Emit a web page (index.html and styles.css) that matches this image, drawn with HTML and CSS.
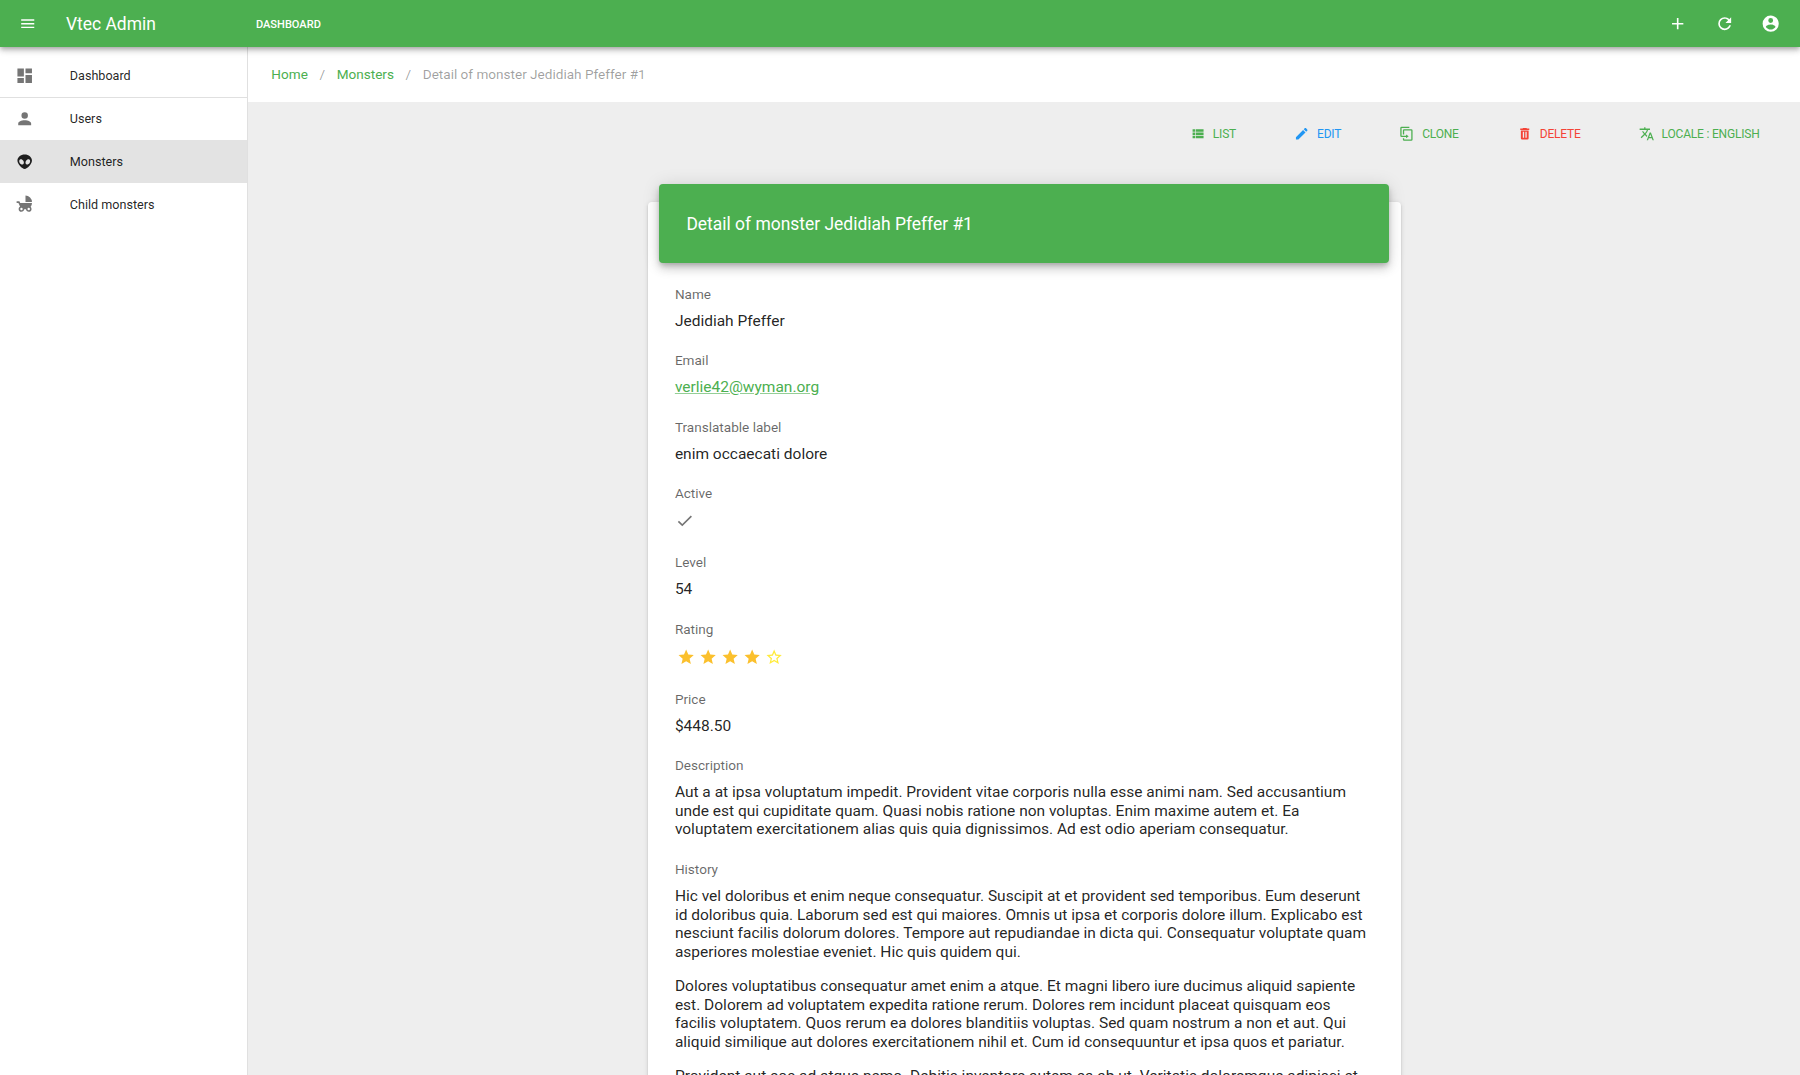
FILE: index.html
```html
<!DOCTYPE html>
<html lang="en">
<head>
<meta charset="utf-8">
<title>Vtec Admin</title>
<link rel="stylesheet" href="styles.css">
</head>
<body>
<header class="app-bar">
  <svg class="icon bar-menu" viewBox="0 0 24 24"><path d="M3 6h18v2H3zM3 11h18v2H3zM3 16h18v2H3z"/></svg>
  <span class="brand">Vtec Admin</span>
  <a class="bar-link">Dashboard</a>
  <div class="bar-actions">
    <svg class="icon" viewBox="0 0 24 24"><path d="M19,13H13V19H11V13H5V11H11V5H13V11H19V13Z"/></svg>
    <svg class="icon" viewBox="0 0 24 24"><path d="M17.65,6.35C16.2,4.9 14.21,4 12,4A8,8 0 0,0 4,12A8,8 0 0,0 12,20C15.73,20 18.84,17.45 19.73,14H17.65C16.83,16.33 14.61,18 12,18A6,6 0 0,1 6,12A6,6 0 0,1 12,6C13.66,6 15.14,6.69 16.22,7.78L13,11H20V4L17.65,6.35Z"/></svg>
    <svg class="icon" viewBox="0 0 24 24"><path d="M12,19.2C9.5,19.2 7.29,17.92 6,16C6.03,14 10,12.9 12,12.9C14,12.9 17.97,14 18,16C16.71,17.92 14.5,19.2 12,19.2M12,5A3,3 0 0,1 15,8A3,3 0 0,1 12,11A3,3 0 0,1 9,8A3,3 0 0,1 12,5M12,2A10,10 0 0,0 2,12A10,10 0 0,0 12,22A10,10 0 0,0 22,12C22,6.47 17.5,2 12,2Z"/></svg>
  </div>
</header>
<div class="shell">
  <nav class="drawer">
    <a class="nav-item"><svg class="icon" viewBox="0 0 24 24"><path d="M13,3V9H21V3M13,21H21V11H13M3,21H11V15H3M3,13H11V3H3V13Z"/></svg><span>Dashboard</span></a>
    <hr class="divider">
    <a class="nav-item"><svg class="icon" viewBox="0 0 24 24"><path d="M12,4A4,4 0 0,1 16,8A4,4 0 0,1 12,12A4,4 0 0,1 8,8A4,4 0 0,1 12,4M12,14C16.42,14 20,15.79 20,18V20H4V18C4,15.79 7.58,14 12,14Z"/></svg><span>Users</span></a>
    <a class="nav-item active"><svg class="icon" viewBox="0 0 24 24"><path d="M12,3C16.97,3 21,6.2 21,10.6C21,15 15.2,21 12,21C8.8,21 3,15 3,10.6C3,6.2 7.03,3 12,3M10.31,10.93C9.29,9.29 7.47,8.58 6.25,9.34C5.03,10.1 4.87,12.05 5.89,13.69C6.92,15.33 8.74,16.04 9.96,15.28C11.18,14.5 11.33,12.57 10.31,10.93M13.69,10.93C12.67,12.57 12.82,14.5 14.04,15.28C15.26,16.04 17.08,15.33 18.11,13.69C19.13,12.05 18.97,10.1 17.75,9.34C16.53,8.58 14.71,9.29 13.69,10.93Z"/></svg><span>Monsters</span></a>
    <a class="nav-item"><svg class="icon" viewBox="0 0 24 24"><path fill-rule="evenodd" d="M13,2V10H21A8,8 0 0,0 13,2M19.32,15.89C20.37,14.54 21,12.84 21,11H6.44L5.49,9H2V11H4.22C4.22,11 6.11,15.07 6.34,15.42C5.24,16 4.5,17.17 4.5,18.5A3.5,3.5 0 0,0 8,22C9.76,22 11.22,20.7 11.46,19H13.54C13.78,20.7 15.24,22 17,22A3.5,3.5 0 0,0 20.5,18.5C20.5,17.46 20.04,16.53 19.32,15.89M8,20A1.5,1.5 0 0,1 6.5,18.5A1.5,1.5 0 0,1 8,17A1.5,1.5 0 0,1 9.5,18.5A1.5,1.5 0 0,1 8,20M17,20A1.5,1.5 0 0,1 15.5,18.5A1.5,1.5 0 0,1 17,17A1.5,1.5 0 0,1 18.5,18.5A1.5,1.5 0 0,1 17,20Z"/></svg><span>Child monsters</span></a>
  </nav>
  <main class="content">
    <div class="breadcrumbs"><a>Home</a><span>/</span><a>Monsters</a><span>/</span><span class="current">Detail of monster Jedidiah Pfeffer #1</span></div>
    <div class="actions">
      <a class="action"><svg class="icon" viewBox="0 0 24 24"><path d="M9,5V9H21V5M9,19H21V15H9M9,14H21V10H9M4,9H8V5H4M4,19H8V15H4M4,14H8V10H4V14Z"/></svg>List</a>
      <a class="action info"><svg class="icon" viewBox="0 0 24 24"><path d="M20.71,7.04C21.1,6.65 21.1,6 20.71,5.63L18.37,3.29C18,2.9 17.35,2.9 16.96,3.29L15.12,5.12L18.87,8.87M3,17.25V21H6.75L17.81,9.93L14.06,6.18L3,17.25Z"/></svg>Edit</a>
      <a class="action"><svg class="icon" viewBox="0 0 24 24"><path d="M11,17H4A2,2 0 0,1 2,15V3A2,2 0 0,1 4,1H16V3H4V15H11V13L15,16L11,19V17M19,21V7H8V13H6V7A2,2 0 0,1 8,5H19A2,2 0 0,1 21,7V21A2,2 0 0,1 19,23H8A2,2 0 0,1 6,21V19H8V21H19Z"/></svg>Clone</a>
      <a class="action error"><svg class="icon" viewBox="0 0 24 24"><path fill-rule="evenodd" d="M19,4H15.5L14.5,3H9.5L8.5,4H5V6H19M6,19A2,2 0 0,0 8,21H16A2,2 0 0,0 18,19V7H6V19M9,9H11V18H9V9M13,9H15V18H13V9"/></svg>Delete</a>
      <a class="action"><svg class="icon" viewBox="0 0 24 24"><path d="M12.87,15.07L10.33,12.56L10.36,12.53C12.1,10.59 13.34,8.36 14.07,6H17V4H10V2H8V4H1V6H12.17C11.5,7.92 10.44,9.75 9,11.35C8.07,10.32 7.3,9.19 6.69,8H4.69C5.42,9.63 6.42,11.17 7.67,12.56L2.58,17.58L4,19L9,14L12.11,17.11L12.87,15.07M18.5,10H16.5L12,22H14L15.12,19H19.87L21,22H23L18.5,10M15.88,17L17.5,12.67L19.12,17H15.88Z"/></svg>Locale : English</a>
    </div>
    <section class="card">
      <h1 class="card-title">Detail of monster Jedidiah Pfeffer #1</h1>
      <dl class="fields">
        <dt>Name</dt><dd>Jedidiah Pfeffer</dd>
        <dt>Email</dt><dd><a class="mail">verlie42@wyman.org</a></dd>
        <dt>Translatable label</dt><dd>enim occaecati dolore</dd>
        <dt>Active</dt><dd class="check"><svg class="icon" viewBox="0 0 24 24"><path d="M21,7L9,19L3.5,13.5L4.91,12.09L9,16.17L19.59,5.59L21,7Z"/></svg></dd>
        <dt>Level</dt><dd>54</dd>
        <dt>Rating</dt><dd class="stars">
          <svg class="icon" viewBox="0 0 24 24"><path d="M12,17.27L18.18,21L16.54,13.97L22,9.24L14.81,8.62L12,2L9.19,8.62L2,9.24L7.45,13.97L5.82,21L12,17.27Z"/></svg>
          <svg class="icon" viewBox="0 0 24 24"><path d="M12,17.27L18.18,21L16.54,13.97L22,9.24L14.81,8.62L12,2L9.19,8.62L2,9.24L7.45,13.97L5.82,21L12,17.27Z"/></svg>
          <svg class="icon" viewBox="0 0 24 24"><path d="M12,17.27L18.18,21L16.54,13.97L22,9.24L14.81,8.62L12,2L9.19,8.62L2,9.24L7.45,13.97L5.82,21L12,17.27Z"/></svg>
          <svg class="icon" viewBox="0 0 24 24"><path d="M12,17.27L18.18,21L16.54,13.97L22,9.24L14.81,8.62L12,2L9.19,8.62L2,9.24L7.45,13.97L5.82,21L12,17.27Z"/></svg>
          <svg class="icon empty" viewBox="0 0 24 24"><path d="M12,15.39L8.24,17.66L9.23,13.38L5.91,10.5L10.29,10.13L12,6.09L13.71,10.13L18.09,10.5L14.77,13.38L15.76,17.66M22,9.24L14.81,8.63L12,2L9.19,8.63L2,9.24L7.45,13.97L5.82,21L12,17.27L18.18,21L16.54,13.97L22,9.24Z"/></svg>
        </dd>
        <dt>Price</dt><dd>$448.50</dd>
        <dt>Description</dt><dd>Aut a at ipsa voluptatum impedit. Provident vitae corporis nulla esse animi nam. Sed accusantium unde est qui cupiditate quam. Quasi nobis ratione non voluptas. Enim maxime autem et. Ea voluptatem exercitationem alias quis quia dignissimos. Ad est odio aperiam consequatur.</dd>
        <dt>History</dt><dd>
          <p>Hic vel doloribus et enim neque consequatur. Suscipit at et provident sed temporibus. Eum deserunt id doloribus quia. Laborum sed est qui maiores. Omnis ut ipsa et corporis dolore illum. Explicabo est nesciunt facilis dolorum dolores. Tempore aut repudiandae in dicta qui. Consequatur voluptate quam asperiores molestiae eveniet. Hic quis quidem qui.</p>
          <p>Dolores voluptatibus consequatur amet enim a atque. Et magni libero iure ducimus aliquid sapiente est. Dolorem ad voluptatem expedita ratione rerum. Dolores rem incidunt placeat quisquam eos facilis voluptatem. Quos rerum ea dolores blanditiis voluptas. Sed quam nostrum a non et aut. Qui aliquid similique aut dolores exercitationem nihil et. Cum id consequuntur et ipsa quos et pariatur.</p>
          <p>Provident aut eos ad atque nemo. Debitis inventore autem ea ab ut. Veritatis doloremque adipisci et</p>
        </dd>
      </dl>
    </section>
  </main>
</div>
</body>
</html>
```
FILE: styles.css
```css
* { box-sizing: border-box; }

html { font-size: 15.51px; }

body {
  margin: 0;
  height: 100vh;
  overflow: hidden;
  display: flex;
  flex-direction: column;
  background: #eee;
  color: rgba(0, 0, 0, .87);
  font-family: Roboto, sans-serif;
  line-height: 1.5;
}

.icon { display: block; flex: none; width: 1.25rem; height: 1.25rem; fill: currentColor; }

.app-bar {
  position: relative;
  z-index: 2;
  flex: none;
  display: flex;
  align-items: center;
  height: 3rem;
  padding: 0 1.25rem 0 1rem;
  background: #4caf50;
  color: #fff;
  box-shadow: 0 2px 4px -1px rgba(0, 0, 0, .2), 0 4px 5px rgba(0, 0, 0, .14), 0 1px 10px rgba(0, 0, 0, .12);
}
.bar-menu { width: 1.125rem; height: 1.125rem; margin-left: .2rem; }
.brand { width: 12.25rem; margin-left: 1.93rem; padding-top: 2px; font-size: 1.125rem; line-height: 1; white-space: nowrap; }
.bar-link { padding-top: 5px; font-size: .7125rem; font-weight: 500; text-transform: uppercase; }
.bar-actions { display: flex; gap: 1.75rem; margin-left: auto; }

.shell { flex: 1; min-height: 0; display: flex; }

.drawer {
  flex: none;
  width: 16rem;
  padding-top: .5rem;
  background: #fff;
  border-right: 1px solid rgba(0, 0, 0, .12);
}
.nav-item {
  display: flex;
  align-items: center;
  gap: 2.28rem;
  height: 2.75rem;
  padding-left: .97rem;
  font-size: .8125rem;
}
.nav-item span { padding-top: 2.2px; }
.nav-item .icon { color: #757575; }
.nav-item.active { background: #e3e3e3; }
.nav-item.active .icon { color: rgba(0, 0, 0, .87); }
.divider { height: 1px; margin: 0 0 -.5px; border: 0; background: rgba(0, 0, 0, .12); }

.content { flex: 1; min-width: 0; }

.breadcrumbs {
  display: flex;
  align-items: center;
  gap: 11.6px;
  height: 55px;
  padding-left: 23.2px;
  background: #fff;
  font-size: .875rem;
  color: rgba(0, 0, 0, .38);
}
.breadcrumbs a { color: #4caf50; }

.actions {
  display: flex;
  align-items: center;
  justify-content: flex-end;
  gap: 58px;
  height: 64px;
  padding-right: 40.5px;
}
.action {
  display: flex;
  align-items: center;
  gap: 7.5px;
  color: #4caf50;
  font-size: 12px;
  letter-spacing: -.2px;
  text-transform: uppercase;
}
.action .icon { width: 1rem; height: 1rem; }
.action.info { color: #2196f3; }
.action.error { color: #f44336; }

.card {
  width: 753px;
  margin: 36px auto 0;
  padding: 0 12px 24px 11.3px;
  background: #fff;
  border-radius: 4px;
  box-shadow: 0 3px 1px -2px rgba(0, 0, 0, .2), 0 2px 2px rgba(0, 0, 0, .14), 0 1px 5px rgba(0, 0, 0, .12);
}
.card-title {
  display: flex;
  align-items: center;
  height: 79px;
  margin: 0;
  padding: 2px 0 0 27.5px;
  position: relative;
  top: -17.5px;
  border-radius: 4px;
  background: #4caf50;
  color: #fff;
  font-size: 1.125rem;
  font-weight: 400;
  box-shadow: 0 3px 5px -1px rgba(0, 0, 0, .2), 0 6px 10px rgba(0, 0, 0, .14), 0 1px 18px rgba(0, 0, 0, .12);
}

.fields { margin: 0; padding: 3px 15px 0 16px; }
.fields dt { margin-bottom: 8px; font-size: .875rem; line-height: 20px; color: rgba(0, 0, 0, .6); }
.fields dd { margin: 0 0 20px; font-size: 1rem; line-height: 1.2; }
.fields p { margin: 0 0 15.5px; }
.mail { text-decoration: underline; text-decoration-color: rgba(76, 175, 80, .6); color: #4caf50; }
.fields .check { height: 21.1px; color: #757575; }
.fields .stars { display: flex; gap: .24rem; height: 21.6px; padding: .5px 0 0 1.9px; color: #fbc02d; }
.stars .icon { width: 1.18rem; height: 1.18rem; }
.stars .empty { color: #ffeb3b; }
```
